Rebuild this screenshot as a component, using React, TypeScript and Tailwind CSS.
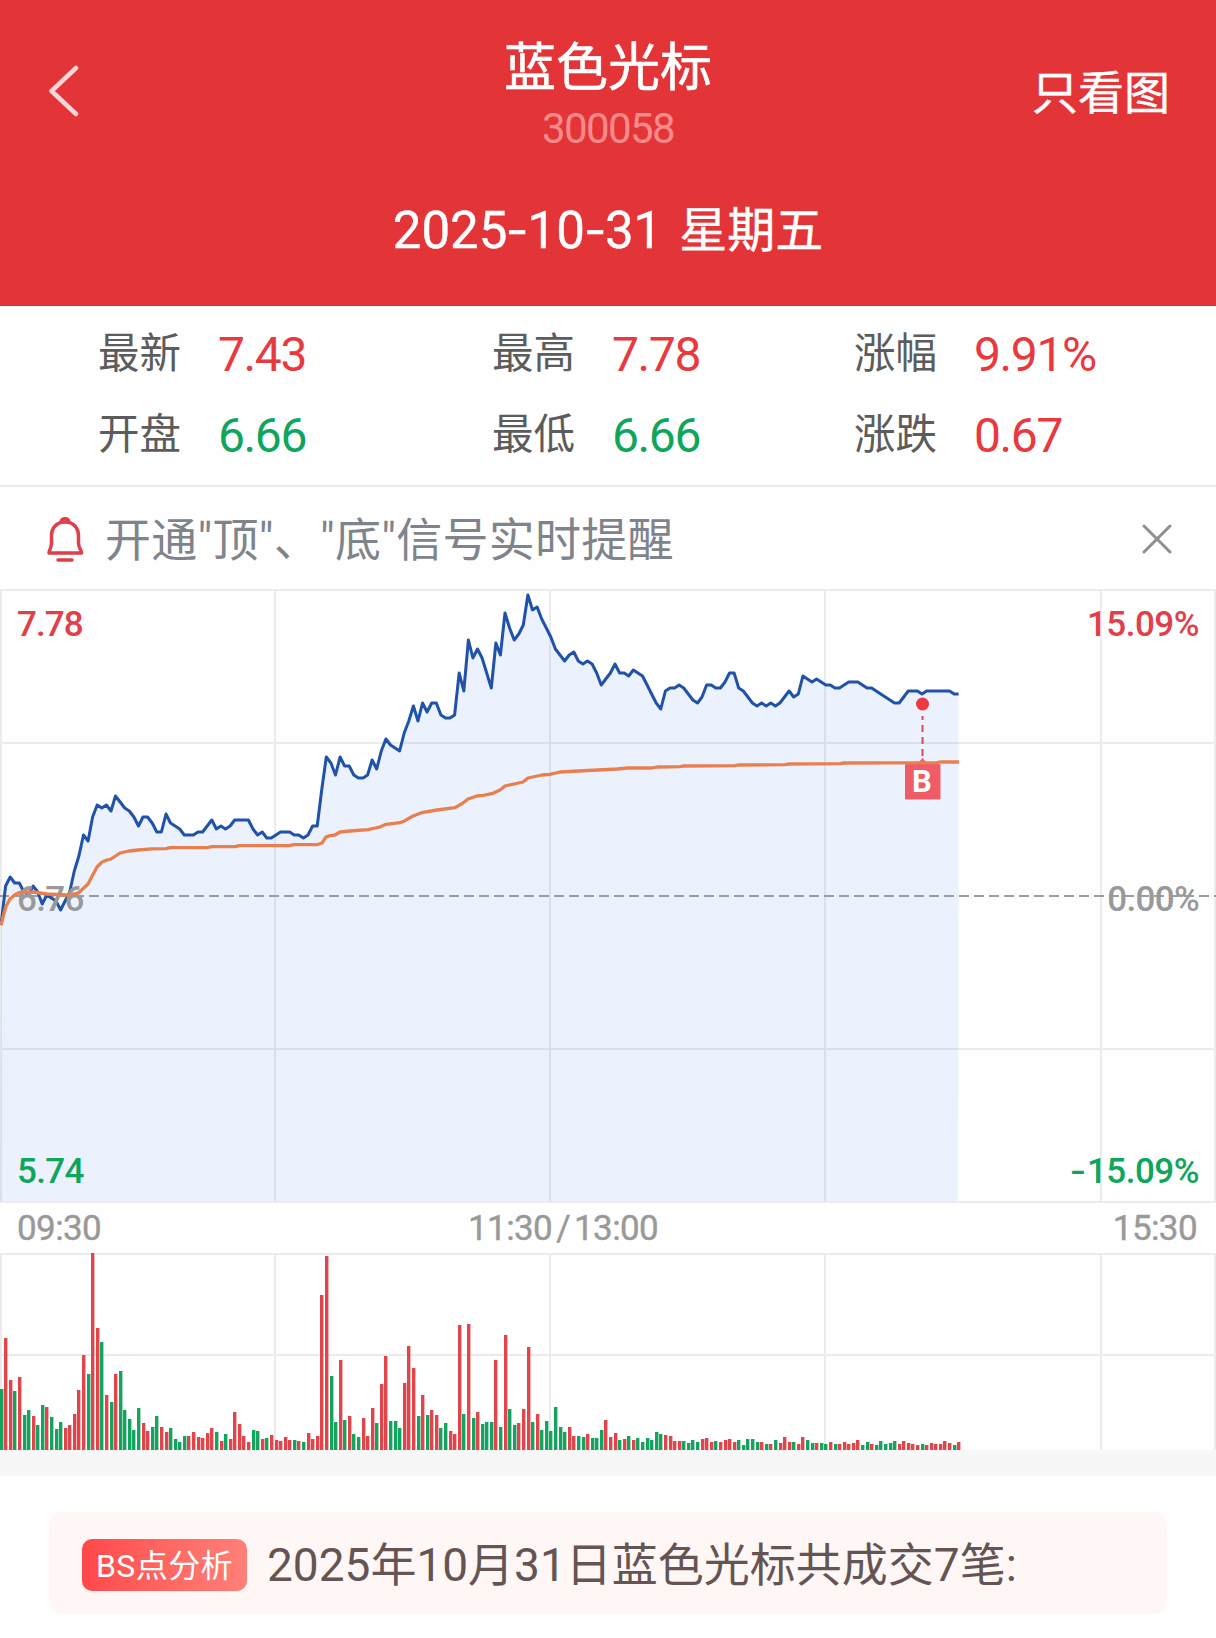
import type { ReactNode } from 'react';

const STEP = 4.582;
const ZERO_Y = 306;

// price per minute, in cents above/below the previous close (6.76)
const ticks = [
  -10, 3, 6, 4, 4, 1, 0, 3, 1, -3, 0, -1, -2, -5, -2, 1, 8, 13, 20, 18, 26, 30, 29, 30, 28, 33, 31, 29, 28, 26,
  23, 26, 26, 24, 21, 21, 27, 24, 23, 22, 20, 20, 20, 21, 21, 23, 25, 22, 23, 22, 23, 25, 25, 25, 25, 22, 20, 21, 19, 19,
  20, 21, 21, 21, 20, 20, 19, 20, 23, 23, 35, 46, 44, 40, 46, 43, 43, 40, 39, 39, 40, 45, 42, 48, 52, 50, 49, 48, 54, 58,
  63, 58, 64, 61, 64, 64, 60, 59, 59, 60, 74, 68, 85, 79, 82, 79, 74, 69, 84, 80, 94, 89, 85, 87, 90, 100, 95, 96, 92, 89,
  86, 82, 80, 78, 80, 81, 78, 77, 78, 77, 74, 70, 72, 74, 77, 74, 74, 73, 75, 74, 73, 70, 67, 64, 62, 68, 69, 69, 70, 69,
  67, 65, 64, 66, 70, 70, 69, 69, 71, 74, 74, 69, 68, 66, 64, 63, 64, 63, 64, 63, 64, 66, 68, 66, 67, 73, 72, 71, 72, 71,
  70, 70, 69, 69, 70, 71, 71, 71, 70, 69, 69, 68, 67, 66, 65, 64, 64, 66, 68, 68, 68, 67, 68, 68, 68, 68, 68, 68, 67, 67,
];

const average =
  '1,336 5.7,318 10,310 14.7,306 19.3,303.5 33,303 47,305 67,306 75,305 79,303.5 88,295 97,278 102,273 107,271 111,270 120,264 129,262 138,261 152,259.8 166,259.7 170,258.7 207,258.7 212,257.7 235,257.7 239,256.7 289,256.7 294,255.7 317,255.7 322,254 326,248 330,246.6 335,246 340,243 350,242 368,240.7 380,238 386,235.3 400,233.7 405,231.7 413,227 423,223.3 437,221 455,218.7 463,214 468,210 477,207 483,206.3 492,204.7 500,201 505,197 523,193 528,189 542,186 550,185.3 560,183 617,180 628,179 652,179 657,178 680,177.7 683,177 735,176.7 738,176 785,175.7 789,175 840,174.7 844,174 937,173.7 940,173 959,173';

// volume per minute: r = up, g = down, followed by the bar height
const volume =
  'g61 r112 r70 g59 r73 g35 g40 r34 g25 g45 r43 g33 g21 g28 r22 r25 r36 r60 r95 g76 r197 r122 g108 r55 g48 r76 g79 g40 g31 g20 ' +
  'g42 r27 r19 g23 g34 r23 r18 g22 g11 g8 g14 r14 r18 r13 r12 r17 r22 g18 r9 g16 r11 r38 r26 r14 r8 g20 g19 r11 g12 r15 ' +
  'r10 r9 r13 r10 g10 r9 g8 r17 r11 r14 r155 r194 g74 g28 r90 g30 r34 g16 g13 r32 r14 r42 g27 r66 r94 g29 g29 g22 r67 r104 ' +
  'r82 g34 r55 g35 r40 r35 g22 g27 r19 r16 r125 g36 r126 g32 r38 g26 g28 g28 r90 g23 r115 g41 g25 r27 r41 r103 g28 r36 g20 g29 ' +
  'g19 g43 g23 g18 r23 r14 g14 g13 r16 g12 g12 g20 r30 r13 r17 g10 r11 g14 r10 g12 g8 g12 g10 g18 g16 r15 r14 r9 r9 g9 ' +
  'g7 g10 g8 r11 r12 r8 g9 r8 r10 r11 r8 g10 g5 g11 g11 g8 r8 g6 r6 g10 r7 r13 r8 g8 r6 r13 g10 g7 r7 g7 ' +
  'g6 r8 g6 r6 r8 r6 r7 r10 g5 g8 r6 g5 g9 g6 g7 g9 r6 r9 r7 r6 r5 g6 r5 r7 r6 r6 r9 r7 g5 r8';

const stats = [
  [
    { label: '最新', value: '7.43', up: true },
    { label: '最高', value: '7.78', up: true },
    { label: '涨幅', value: '9.91%', up: true },
  ],
  [
    { label: '开盘', value: '6.66', up: false },
    { label: '最低', value: '6.66', up: false },
    { label: '涨跌', value: '0.67', up: true },
  ],
];

const verticals = [1, 275, 550, 825, 1101, 1215];

function Dash() {
  return <span className="mx-[3px] inline-block scale-x-130">-</span>;
}

function Header() {
  return (
    <header className="h-[306px] bg-[#e33537] text-white">
      <div className="grid h-[184px] grid-cols-[1fr_auto_1fr] items-center px-[48px]">
        <svg width="34" height="52" viewBox="0 0 34 52" fill="none" className="-mt-[2px] opacity-80">
          <path d="M28 3 L3.500 26 L28 49" stroke="white" strokeWidth="4.500" strokeLinecap="round" strokeLinejoin="round" />
        </svg>
        <div className="flex flex-col items-center pt-[4px]">
          <h1 className="text-[52px] leading-[60px] [-webkit-text-stroke:0.6px_white]">蓝色光标</h1>
          <span className="mt-[9px] text-[42px] leading-[42px] tracking-[-1.6px] text-[#fb8a8b]">300058</span>
        </div>
        <span className="-mr-[2px] justify-self-end pt-[1px] text-[46px] leading-none [-webkit-text-stroke:0.4px_white]">
          只看图
        </span>
      </div>
      <div className="flex h-[92px] items-center justify-center text-[48px] leading-none [-webkit-text-stroke:0.4px_white]">
        <span className="pt-[1px] text-[51px]">
          2025
          <Dash />
          10
          <Dash />
          31
        </span>
        <span className="ml-[17px] pt-[2px]">星期五</span>
      </div>
    </header>
  );
}

function Stats() {
  return (
    <section className="flex h-[181px] flex-col border-b-2 border-[#ebebeb] pt-[6px]">
      {stats.map((row, i) => (
        <div key={i} className="grid h-[81px] grid-cols-[394px_362px_1fr] items-center pl-[98px]">
          {row.map((s) => (
            <div key={s.label} className="flex items-center">
              <span className="w-[120px] pt-[2px] text-[41.500px] leading-none text-[#5c5c5c]">{s.label}</span>
              <span
                className={`pt-[4px] text-[48px] leading-none tracking-[-1.4px] ${s.up ? 'text-[#e8393f]' : 'text-[#0ea55d]'}`}
              >
                {s.value}
              </span>
            </div>
          ))}
        </div>
      ))}
    </section>
  );
}

function Notice() {
  return (
    <section className="flex h-[102px] items-center px-[45px] text-[#7f848c]">
      <svg width="40" height="48" viewBox="0 0 40 48" fill="none" stroke="#dc4048" strokeWidth="3.500" className="mt-[3px]">
        <path d="M20 6 C11.500 6 6.500 12 6.500 20 V27 C6.500 32 4 34 4 37 H36.500 C36.500 34 33.500 32 33.500 27 V20 C33.500 12 28.500 6 20 6 Z" strokeLinejoin="round" />
        <path d="M16 6.500 C16.500 1.500 23.500 1.500 24 6.500" />
        <path d="M13 44 H27" strokeLinecap="round" />
      </svg>
      <span className="ml-[20px] pt-[4px] text-[46px] leading-none tracking-[0.25px]">开通"顶"、"底"信号实时提醒</span>
      <svg width="30" height="30" viewBox="0 0 30 30" className="ml-auto mr-[-1px] mt-[1px]" stroke="#8f8f8f" strokeWidth="3">
        <path d="M2 2 L28 28 M28 2 L2 28" strokeLinecap="round" />
      </svg>
    </section>
  );
}

function AxisLabel({ className, children }: { className: string; children: ReactNode }) {
  return (
    <span className={`absolute text-[35px] font-medium leading-[36px] ${className}`}>{children}</span>
  );
}

function PriceChart() {
  const line = ticks.map((t, i) => `${(1 + i * STEP).toFixed(1)},${ZERO_Y - t * 3}`).join(' ');

  return (
    <section className="relative h-[614px]">
      <AxisLabel className="left-[17px] top-[18px] tracking-[-0.9px] text-[#e0404a]">7.78</AxisLabel>
      <AxisLabel className="right-[17px] top-[18px] tracking-[-0.5px] text-[#e0404a]">15.09%</AxisLabel>
      <svg width="1216" height="614" viewBox="0 0 1216 614" fill="none" className="block">
        <g stroke="#ebebeb" strokeWidth="2">
          {[1, 154, 460, 613].map((y) => (
            <path key={y} d={`M0 ${y} H1216`} />
          ))}
          {verticals.map((x) => (
            <path key={x} d={`M${x} 0 V614`} />
          ))}
        </g>
        <polygon points={`0,612 1,336 ${line} 958,612`} fill="#3b78ff" fillOpacity="0.095" />
        <path d="M-1 307 H1216" stroke="#999da6" strokeWidth="2" strokeDasharray="10 5" />
        <polyline points={line} stroke="#1f52a8" strokeWidth="3" strokeLinejoin="round" />
      </svg>
      <AxisLabel className="left-[17px] top-[293px] tracking-[-0.7px] text-[#999]">6.76</AxisLabel>
      <AxisLabel className="right-[17px] top-[293px] tracking-[-0.7px] text-[#999]">0.00%</AxisLabel>
      <AxisLabel className="left-[17px] top-[565px] tracking-[-0.7px] text-[#0ea55d]">5.74</AxisLabel>
      <AxisLabel className="right-[17px] top-[565px] tracking-[-0.5px] text-[#0ea55d]">
        <span className="mr-[4px] inline-block scale-x-130">-</span>15.09%
      </AxisLabel>
      <svg width="1216" height="614" viewBox="0 0 1216 614" fill="none" className="absolute left-0 top-0">
        <path d="M922.500 127 V174" stroke="#d94a5c" strokeWidth="2" strokeDasharray="7 5" strokeDashoffset="3" />
        <circle cx="922.500" cy="115" r="6.500" fill="#ee3842" />
        <path d="M917 175 L922.500 169 L928 175 Z" fill="#ef5c68" />
        <rect x="905" y="175" width="35.500" height="35.500" rx="1" fill="#ef5c68" />
        <polyline points={average} stroke="#e97f4e" strokeWidth="3.300" strokeLinejoin="round" />
      </svg>
      <span className="absolute left-[904px] top-[175px] w-[36px] text-center text-[31px] font-bold leading-[36px] text-white">
        B
      </span>
    </section>
  );
}

function VolumeChart() {
  return (
    <svg width="1216" height="197" viewBox="0 0 1216 197" fill="none" className="block">
      <g stroke="#ebebeb" strokeWidth="2">
        <path d="M0 1 H1216 M0 102 H1216" />
        {verticals.map((x) => (
          <path key={x} d={`M${x} 0 V197`} />
        ))}
      </g>
      {volume.split(' ').map((bar, i) => {
        const h = Number(bar.slice(1));
        return (
          <rect
            key={i}
            x={Math.round(i * STEP - 0.4)}
            y={197 - h}
            width="3.400"
            height={h}
            fill={bar[0] === 'r' ? '#e0454c' : '#14a460'}
          />
        );
      })}
    </svg>
  );
}

export default function App() {
  return (
    <div className="h-[1638px] w-[1216px] overflow-hidden bg-[#fefefe] font-[Roboto,'Noto_Sans_CJK_SC',sans-serif]">
      <Header />
      <Stats />
      <Notice />
      <PriceChart />

      {/* time axis */}
      <div className="grid h-[50px] grid-cols-3 items-center px-[17px] pt-[1px] text-[35px] leading-none tracking-[-0.6px] text-[#999] [-webkit-text-stroke:0.4px_#999]">
        <span>09:30</span>
        <span className="pl-[57px]">
          11:30<span className="mx-[4px]">/</span>13:00
        </span>
        <span className="pr-[2px] text-right">15:30</span>
      </div>

      <VolumeChart />
      <div className="h-[26px] bg-[#f7f7f7]" />

      {/* trade summary */}
      <section className="mx-[49px] mt-[36px] flex h-[102px] items-center rounded-[14px] bg-[#fff7f5] pl-[33px] pt-[3px]">
        <span className="flex h-[52px] w-[165px] items-center justify-center rounded-[10px] bg-linear-to-r from-[#ff474a] to-[#ff8078] pt-[3px] text-[32px] leading-none tracking-[0.4px] text-white">
          BS点分析
        </span>
        <span className="ml-[20px] text-[46px] leading-none text-[#645554]">2025年10月31日蓝色光标共成交7笔:</span>
      </section>
    </div>
  );
}
